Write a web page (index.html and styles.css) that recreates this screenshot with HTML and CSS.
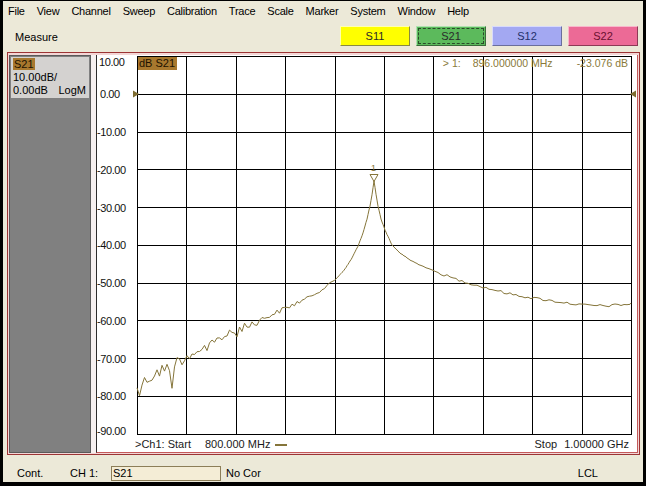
FILE: index.html
```html
<!DOCTYPE html>
<html>
<head>
<meta charset="utf-8">
<title>Network Analyzer</title>
<link rel="stylesheet" href="styles.css">
</head>
<body>
<div class="window">
  <div class="menubar">
    <span class="mi first">File</span>
    <span class="mi">View</span>
    <span class="mi">Channel</span>
    <span class="mi">Sweep</span>
    <span class="mi">Calibration</span>
    <span class="mi">Trace</span>
    <span class="mi">Scale</span>
    <span class="mi">Marker</span>
    <span class="mi">System</span>
    <span class="mi">Window</span>
    <span class="mi">Help</span>
  </div>
  <div class="toolbar">
    <span class="measure">Measure</span>
    <div class="sbtns">
      <div class="sb s11"><span>S11</span></div>
      <div class="sb s21"><span>S21</span></div>
      <div class="sb s12"><span>S12</span></div>
      <div class="sb s22"><span>S22</span></div>
    </div>
  </div>
  <div class="frame">
    <div class="leftpanel">
      <div class="tinfo">
        <div class="tline"><span class="tag">S21</span></div>
        <div class="tline">10.00dB/</div>
        <div class="tline split"><span>0.00dB</span><span>LogM</span></div>
      </div>
    </div>
    <div class="sep"></div>
    <div class="chart">
      <div class="chartmain">
        <div class="ylabels">
          <div class="yl top">10.00</div>
          <div class="yl pos">0.00</div>
          <div class="yl">-10.00</div>
          <div class="yl">-20.00</div>
          <div class="yl">-30.00</div>
          <div class="yl">-40.00</div>
          <div class="yl">-50.00</div>
          <div class="yl">-60.00</div>
          <div class="yl">-70.00</div>
          <div class="yl">-80.00</div>
          <div class="yl last">-90.00</div>
        </div>
        <div class="plot">
          <svg class="grid" width="495" height="379" viewBox="0 0 495 379">
            <g class="glines">
              <line x1="0.5" y1="0" x2="0.5" y2="379"/>
              <line x1="49.5" y1="0" x2="49.5" y2="379"/>
              <line x1="99.5" y1="0" x2="99.5" y2="379"/>
              <line x1="148.5" y1="0" x2="148.5" y2="379"/>
              <line x1="198.5" y1="0" x2="198.5" y2="379"/>
              <line x1="247.5" y1="0" x2="247.5" y2="379"/>
              <line x1="296.5" y1="0" x2="296.5" y2="379"/>
              <line x1="346.5" y1="0" x2="346.5" y2="379"/>
              <line x1="395.5" y1="0" x2="395.5" y2="379"/>
              <line x1="445.5" y1="0" x2="445.5" y2="379"/>
              <line x1="494.5" y1="0" x2="494.5" y2="379"/>
              <line x1="0" y1="0.5" x2="495" y2="0.5"/>
              <line x1="0" y1="38.5" x2="495" y2="38.5"/>
              <line x1="0" y1="76.5" x2="495" y2="76.5"/>
              <line x1="0" y1="113.5" x2="495" y2="113.5"/>
              <line x1="0" y1="151.5" x2="495" y2="151.5"/>
              <line x1="0" y1="189.5" x2="495" y2="189.5"/>
              <line x1="0" y1="227.5" x2="495" y2="227.5"/>
              <line x1="0" y1="264.5" x2="495" y2="264.5"/>
              <line x1="0" y1="302.5" x2="495" y2="302.5"/>
              <line x1="0" y1="340.5" x2="495" y2="340.5"/>
              <line x1="0" y1="378.5" x2="495" y2="378.5"/>
            </g>
            <polyline id="trace" class="trace" points=""/>
            <polygon class="mk-hollow" points="233,118.5 241,118.5 237,125.5"/>
            <text class="mk-num" x="236.5" y="115">1</text>
            <polygon class="mk-fill" points="-4,34.5 -4,41.5 2,38"/>
            <polygon class="mk-fill" points="499,34.5 499,41.5 493,38"/>
          </svg>
          <span class="dbtag">dB S21</span>
          <div class="mread">
            <span>&gt;</span><span class="m1">1:</span><span class="m2">896.000000 MHz</span><span class="m3">-23.076 dB</span>
          </div>
        </div>
      </div>
      <div class="chartfoot">
        <div class="fstart"><span>&gt;Ch1: Start</span><span class="fval">800.000 MHz</span><span class="fdash"></span></div>
        <div class="fstop"><span>Stop</span><span class="fval2">1.00000 GHz</span></div>
      </div>
    </div>
  </div>
  <div class="status">
    <span class="sc1">Cont.</span>
    <span class="sc2">CH 1:</span>
    <span class="sbox">S21</span>
    <span class="sc4">No Cor</span>
    <span class="sc5">LCL</span>
  </div>
</div>
<script src="script.js"></script>
</body>
</html>
```

FILE: styles.css
```css
* { box-sizing: border-box; }
html, body { margin: 0; padding: 0; }
body {
  background: #000;
  width: 646px;
  height: 486px;
  overflow: hidden;
  font-family: "Liberation Sans", Arial, sans-serif;
  font-size: 11px;
  color: #000;
}
.window {
  margin: 1px 3px 0 3px;
  height: 481px;
  background: #ece9d8;
  display: flex;
  flex-direction: column;
}
.menubar {
  height: 21px;
  display: flex;
  align-items: center;
  flex-shrink: 0;
}
.mi {
  padding: 0 6px;
  line-height: 21px;
  letter-spacing: -0.25px;
}
.mi.first { padding-left: 5px; }
.toolbar {
  height: 28px;
  display: flex;
  align-items: flex-start;
  flex-shrink: 0;
}
.measure {
  margin-left: 12px;
  line-height: 28px;
  padding-top: 1px;
}
.sbtns {
  margin-left: auto;
  margin-right: 5px;
  margin-top: 4px;
  display: flex;
  gap: 6px;
}
.sb {
  width: 70px;
  height: 20px;
  border: 1px solid;
  border-color: #f4f4f4 #6c6c6c #6c6c6c #f4f4f4;
  display: flex;
  align-items: center;
  justify-content: center;
  color: #2a2a2a;
}
.s11 { background: #ffff00; border-color: #ffffb0 #8a8a40 #8a8a40 #ffffb0; }
.s21 { background: #5cba5c; border-color: #b0e0b0 #3a6a3a #3a6a3a #b0e0b0; padding: 1px; }
.s21 span {
  width: 100%;
  height: 100%;
  border: 1px dashed #2a4a2a;
  display: flex;
  align-items: center;
  justify-content: center;
}
.s12 { background: #a3a8f2; border-color: #d8dafc #6a6e9c #6a6e9c #d8dafc; color: #23306a; }
.s22 { background: #ec6a96; border-color: #f8b8cc #8c3a56 #8c3a56 #f8b8cc; color: #6a1030; }

.frame {
  margin: 2px 3px 0 4px;
  height: 403px;
  border: 1px solid #9c3434;
  padding: 2px 1px 1px 1px;
  background: #f3d6d6;
  display: flex;
  flex-shrink: 0;
}
.leftpanel {
  width: 82px;
  border: 1px solid #5a5a5a;
  padding: 1px;
  background: #808080;
  flex-shrink: 0;
}
.tinfo {
  height: 41px;
  background: #d4d2d0;
  padding: 1px 0 0 1px;
}
.tline {
  height: 13px;
  line-height: 13px;
  padding-left: 1px;
}
.tline.split {
  display: flex;
  justify-content: space-between;
  padding-right: 3px;
}
.tag {
  background: #a8782e;
  color: #1e1200;
  padding: 0 1px;
  display: inline-block;
  line-height: 12px;
}
.sep {
  width: 5px;
  background: #f6f0f0;
  flex-shrink: 0;
}
.chart {
  flex: 1;
  background: #fff;
  border-left: 1px solid #2c2c2c;
  border-right: 1px solid #c45a5a;
  border-bottom: 1px solid #c45a5a;
  display: flex;
  flex-direction: column;
}
.chartmain {
  display: flex;
  height: 380px;
  flex-shrink: 0;
}
.ylabels {
  width: 40px;
  height: 380px;
  display: flex;
  flex-direction: column;
  flex-shrink: 0;
}
.yl {
  height: 37.75px;
  flex-shrink: 0;
  display: flex;
  align-items: center;
  letter-spacing: -0.4px;
  color: #111;
}
.yl.top {
  height: 20.6px;
  align-items: flex-start;
  padding-top: 1px;
  padding-left: 2px;
}
.yl.pos { padding-left: 3px; }
.yl.last { padding-bottom: 6px; }
.plot {
  position: relative;
  width: 495px;
  height: 379px;
  margin-top: 1px;
  flex-shrink: 0;
}
.grid {
  display: block;
  overflow: visible;
}
.glines line {
  stroke: #000;
  stroke-width: 1;
  shape-rendering: crispEdges;
}
.trace {
  fill: none;
  stroke: #85753a;
  stroke-width: 1;
  stroke-linejoin: round;
}
.mk-hollow {
  fill: none;
  stroke: #85753a;
  stroke-width: 1;
}
.mk-num {
  font-family: "Liberation Sans", Arial, sans-serif;
  font-size: 9px;
  fill: #85753a;
  text-anchor: middle;
}
.mk-fill { fill: #7e6c30; }
.dbtag {
  position: absolute;
  left: 1px;
  top: 1px;
  background: #a8782e;
  color: #1e1200;
  line-height: 13px;
  padding: 0 2px 0 1px;
}
.mread {
  position: absolute;
  right: 4px;
  top: 1px;
  line-height: 13px;
  font-size: 10.5px;
  color: #8a7a3a;
  display: flex;
  white-space: nowrap;
}
.mread .m1 { margin-left: 3px; }
.mread .m2 { margin-left: 12px; }
.mread .m3 { margin-left: 24px; }
.chartfoot {
  flex: 1;
  display: flex;
  justify-content: space-between;
  align-items: center;
  padding: 0 8px 0 38px;
  color: #1a1a1a;
}
.fval { margin-left: 14px; }
.fdash {
  display: inline-block;
  width: 12px;
  height: 2px;
  background: #85753a;
  margin-left: 5px;
  vertical-align: middle;
}
.fval2 { margin-left: 7px; }

.status {
  flex: 1;
  display: flex;
  align-items: flex-end;
  padding-bottom: 1px;
}
.status > span { line-height: 15px; }
.sc1 { width: 67px; padding-left: 14px; }
.sc2 { width: 41px; }
.sbox {
  width: 110px;
  height: 15px;
  background: #f4edd6;
  border: 1px solid #8c7e58;
  padding-left: 1px;
  line-height: 13px !important;
}
.sc4 { padding-left: 5px; }
.sc5 { margin-left: auto; margin-right: 45px; }
```

FILE: script.js
```js
(function () {
  var ctrl = [[137,386],[150,378],[165,368],[186,357],[212,342],[236,331],[260,320],[286,308],[305,299],[320,291],[335,280],[345,269],[352,258],[358,246],[363,233],[367,219],[370,206],[372,195],[374,181],[376,194],[378,206],[381,219],[385,230],[392,245],[400,253],[410,260],[420,265],[434,271],[455,279],[483,287],[510,294],[533,298],[560,302],[582,305],[605,306],[631,304]];
  var ox = 137, oy = 56;
  function base(x) {
    for (var i = 0; i < ctrl.length - 1; i++) {
      if (x <= ctrl[i + 1][0]) {
        var t = (x - ctrl[i][0]) / (ctrl[i + 1][0] - ctrl[i][0]);
        return ctrl[i][1] + t * (ctrl[i + 1][1] - ctrl[i][1]);
      }
    }
    return ctrl[ctrl.length - 1][1];
  }
  function amp(x) {
    if (x < 200) return 6;
    if (x < 260) return 4;
    if (x < 300) return 2.5;
    if (x < 335) return 1.2;
    if (x < 440) return 0.3;
    return 1.3;
  }
  var s = 12345;
  function rnd() { s = (s * 1103515245 + 12345) % 2147483648; return s / 2147483648; }
  var xs = [], x;
  for (x = 137; x < 340; x += 2.5) xs.push(x);
  for (x = 340; x < 420; x += 1) xs.push(x);
  for (x = 420; x < 631; x += 3) xs.push(x);
  xs.push(631);
  var pts = [];
  for (var i = 0; i < xs.length; i++) {
    x = xs[i];
    var a = amp(x);
    var n = (rnd() * 2 - 1) * a;
    if (x < 250 && rnd() > 0.9) n += a * 1.6;
    if (x >= 170 && x < 172.5) n = 24;
    if (x === 374) n = 0;
    var y = base(x) + n;
    pts.push((x - ox).toFixed(1) + ',' + (y - oy).toFixed(1));
  }
  document.getElementById('trace').setAttribute('points', pts.join(' '));
})();
```
